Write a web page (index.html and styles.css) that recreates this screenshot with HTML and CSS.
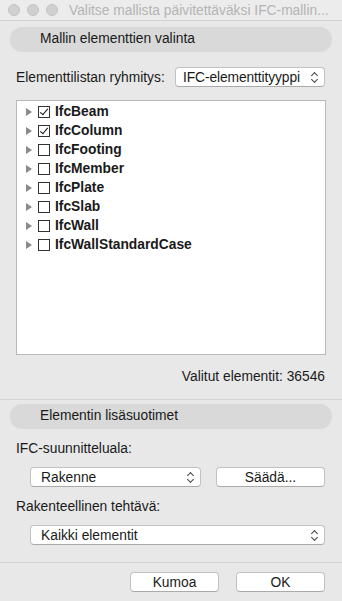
FILE: index.html
```html
<!DOCTYPE html>
<html lang=fi>
<head>
	<meta charset="UTF-8">
	<title>Valitse mallista päivitettäväksi IFC-mallin elementit</title>
	<link rel="stylesheet" href="styles.css">
</head><body>
<div class=Window>
	<div class=TitleBar>
		<span class=Light></span><span class=Light></span><span class=Light></span>
		<span class=Title>Valitse mallista päivitettäväksi IFC-mallin...</span>
	</div>

	<div class=Head>Mallin elementtien valinta</div>

	<div class=GroupRow>
		<span>Elementtilistan ryhmitys:</span>
		<div class="Popup Group">IFC-elementtityyppi<span class=Arrows></span></div>
	</div>

	<div class=List>
		<div class=Item><span class=Tri></span><span class="Box On"></span>IfcBeam</div>
		<div class=Item><span class=Tri></span><span class="Box On"></span>IfcColumn</div>
		<div class=Item><span class=Tri></span><span class=Box></span>IfcFooting</div>
		<div class=Item><span class=Tri></span><span class=Box></span>IfcMember</div>
		<div class=Item><span class=Tri></span><span class=Box></span>IfcPlate</div>
		<div class=Item><span class=Tri></span><span class=Box></span>IfcSlab</div>
		<div class=Item><span class=Tri></span><span class=Box></span>IfcWall</div>
		<div class=Item><span class=Tri></span><span class=Box></span>IfcWallStandardCase</div>
	</div>

	<div class=Count>Valitut elementit: 36546</div>
	<div class=Sep></div>

	<div class="Head Head2">Elementin lisäsuotimet</div>

	<div class=Label>IFC-suunnitteluala:</div>
	<div class=Row>
		<div class="Popup Discipline">Rakenne<span class=Arrows></span></div>
		<div class="Btn Adjust">Säädä...</div>
	</div>

	<div class=Label>Rakenteellinen tehtävä:</div>
	<div class=Row>
		<div class="Popup Task">Kaikki elementit<span class=Arrows></span></div>
	</div>

	<div class="Sep Sep2"></div>
	<div class=Buttons>
		<div class=Btn>Kumoa</div>
		<div class=Btn>OK</div>
	</div>
</div>
</body></html>
```

FILE: styles.css
```css
body { margin:0; background:#e8e8e8; font-family:"Liberation Sans", Arial, sans-serif; font-size:13.8px; color:#1a1a1a; }
.Window { width:342px; height:601px; display:flex; flex-direction:column; }

.TitleBar { height:20px; border-bottom:1px solid #d2d2d2; display:flex; align-items:center; padding-left:8px; background:#ececec; }
.Light { width:12px; height:12px; border-radius:50%; background:#d0d0d0; border:0.5px solid #c4c4c4; box-sizing:border-box; margin-right:7px; }
.Title { color:#b4b4b4; margin-left:4px; white-space:nowrap; overflow:hidden; }

.Head { margin:6px 10px 0; height:25px; line-height:24px; border-radius:12px; background:#d9d9d9; padding-left:30px; }
.Head2 { margin-top:4px; }

.GroupRow { display:flex; align-items:center; justify-content:space-between; margin:15px 17px 0 16px; }

.Popup { position:relative; height:20px; line-height:19px; background:#fff; border:1px solid #c2c2c2; border-bottom-color:#aaa; border-radius:4px; box-sizing:border-box; padding-left:10px; white-space:nowrap; }
.Arrows { position:absolute; right:5px; top:4px; width:8px; height:11px; }
.Arrows:before, .Arrows:after { content:""; position:absolute; left:1px; width:4px; height:4px; border-left:1.3px solid #444; border-top:1.3px solid #444; }
.Arrows:before { top:1px; transform:rotate(45deg); }
.Arrows:after { bottom:1px; transform:rotate(-135deg); }
.Group { width:150px; padding-left:7px; letter-spacing:-0.1px; }

.List { margin:13px 16px 0; height:255px; background:#fff; border:1px solid #b8b8b8; box-sizing:border-box; padding-top:1px; }
.Item { height:19px; display:flex; align-items:center; font-weight:bold; padding-left:9px; }
.Tri { width:0; height:0; border-left:6px solid #8a8a8a; border-top:4px solid transparent; border-bottom:4px solid transparent; margin-right:6px; }
.Box { width:10px; height:10px; border:1px solid #333; background:#fff; margin-right:5px; position:relative; }
.On:after { content:""; position:absolute; left:3px; top:0; width:3px; height:7px; border-right:1.6px solid #111; border-bottom:1.6px solid #111; transform:rotate(40deg); }

.Count { text-align:right; margin:14px 17px 0; height:16px; line-height:16px; }
.Sep { height:1px; background:#d4d4d4; margin:14px 0 0; }

.Label { margin:12px 16px 0; height:16px; line-height:16px; }
.Row { display:flex; align-items:center; justify-content:space-between; margin:10px 17px 0 30px; }
.Discipline { width:171px; }
.Task { width:295px; }

.Btn { height:20px; line-height:19px; background:#fff; border:1px solid #c2c2c2; border-bottom-color:#aaa; border-radius:4px; box-sizing:border-box; text-align:center; }
.Adjust { width:109px; }

.Sep2 { margin-top:17px; }
.Buttons { display:flex; justify-content:flex-end; gap:17px; margin:9px 17px 0; }
.Buttons .Btn { width:89px; }
```
